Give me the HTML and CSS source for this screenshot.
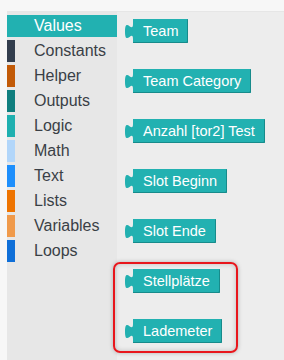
FILE: index.html
```html
<!DOCTYPE html>
<html>
<head>
<meta charset="utf-8">
<link rel="stylesheet" href="styles.css">
</head>
<body>
<div class="app">
  <div class="toolbox">
    <div class="cat selected" style="--c:#22b1b1"><span class="bar"></span><span class="label">Values</span></div>
    <div class="cat" style="--c:#333e4e"><span class="bar"></span><span class="label">Constants</span></div>
    <div class="cat" style="--c:#c25a07"><span class="bar"></span><span class="label">Helper</span></div>
    <div class="cat" style="--c:#0f7e7e"><span class="bar"></span><span class="label">Outputs</span></div>
    <div class="cat" style="--c:#1fb0b0"><span class="bar"></span><span class="label">Logic</span></div>
    <div class="cat" style="--c:#b2d6fa"><span class="bar"></span><span class="label">Math</span></div>
    <div class="cat" style="--c:#1e8ffc"><span class="bar"></span><span class="label">Text</span></div>
    <div class="cat" style="--c:#ee7401"><span class="bar"></span><span class="label">Lists</span></div>
    <div class="cat" style="--c:#f09a4b"><span class="bar"></span><span class="label">Variables</span></div>
    <div class="cat" style="--c:#0f6fd8"><span class="bar"></span><span class="label">Loops</span></div>
  </div>
  <div class="flyout">
    <div class="block"><svg class="tab" viewBox="0 0 8 24" width="8" height="24"><path d="M8 5 c0 10 -8 -8 -8 7.5 s8 -2.5 8 7.5 Z"/></svg><div class="body">Team</div></div>
    <div class="block"><svg class="tab" viewBox="0 0 8 24" width="8" height="24"><path d="M8 5 c0 10 -8 -8 -8 7.5 s8 -2.5 8 7.5 Z"/></svg><div class="body">Team Category</div></div>
    <div class="block"><svg class="tab" viewBox="0 0 8 24" width="8" height="24"><path d="M8 5 c0 10 -8 -8 -8 7.5 s8 -2.5 8 7.5 Z"/></svg><div class="body">Anzahl [tor2] Test</div></div>
    <div class="block"><svg class="tab" viewBox="0 0 8 24" width="8" height="24"><path d="M8 5 c0 10 -8 -8 -8 7.5 s8 -2.5 8 7.5 Z"/></svg><div class="body">Slot Beginn</div></div>
    <div class="block"><svg class="tab" viewBox="0 0 8 24" width="8" height="24"><path d="M8 5 c0 10 -8 -8 -8 7.5 s8 -2.5 8 7.5 Z"/></svg><div class="body">Slot Ende</div></div>
    <div class="block"><svg class="tab" viewBox="0 0 8 24" width="8" height="24"><path d="M8 5 c0 10 -8 -8 -8 7.5 s8 -2.5 8 7.5 Z"/></svg><div class="body">Stellplätze</div></div>
    <div class="block"><svg class="tab" viewBox="0 0 8 24" width="8" height="24"><path d="M8 5 c0 10 -8 -8 -8 7.5 s8 -2.5 8 7.5 Z"/></svg><div class="body">Lademeter</div></div>
  </div>
</div>
<div class="highlight"></div>
</body>
</html>
```
FILE: styles.css
```css
html, body {
  margin: 0;
  padding: 0;
}
body {
  width: 284px;
  height: 360px;
  overflow: hidden;
  background: #f7f7f7;
  font-family: "Liberation Sans", Arial, sans-serif;
  position: relative;
}
.app {
  margin: 11px 0 0 7px;
  height: 349px;
  display: flex;
  border-top: 1px solid #e6e6e6;
  box-sizing: border-box;
}
.toolbox {
  width: 110px;
  flex: none;
  background: #e7e7e7;
  padding-top: 3px;
  display: flex;
  flex-direction: column;
  gap: 3px;
}
.cat {
  height: 22px;
  display: flex;
  align-items: center;
  color: #3a3f46;
  font-size: 16px;
}
.cat .bar {
  width: 8px;
  height: 22px;
  background: var(--c);
  flex: none;
}
.cat .label {
  margin-left: 19px;
  line-height: 22px;
}
.cat.selected {
  background: var(--c);
  color: #ffffff;
}
.flyout {
  flex: 1;
  background: #ededed;
  padding: 7px 0 0 8px;
  display: flex;
  flex-direction: column;
  align-items: flex-start;
  gap: 26px;
}
.block {
  display: flex;
  height: 24px;
}
.tab {
  display: block;
  flex: none;
}
.tab path {
  fill: #22b0b0;
}
.body {
  height: 24px;
  box-sizing: border-box;
  padding: 0 10px;
  background: #22b1b1;
  color: #ffffff;
  font-size: 14.5px;
  line-height: 24px;
  white-space: nowrap;
  box-shadow: inset -1px -1px 0 #178b8b;
  border-radius: 0 1px 1px 0;
}
.highlight {
  position: absolute;
  left: 113px;
  top: 262px;
  width: 125px;
  height: 91px;
  box-sizing: border-box;
  border: 2px solid #e8161c;
  border-radius: 7px;
  box-shadow: 0 0 4px rgba(0,0,0,0.25), inset 0 0 5px rgba(0,0,0,0.2);
}
```
